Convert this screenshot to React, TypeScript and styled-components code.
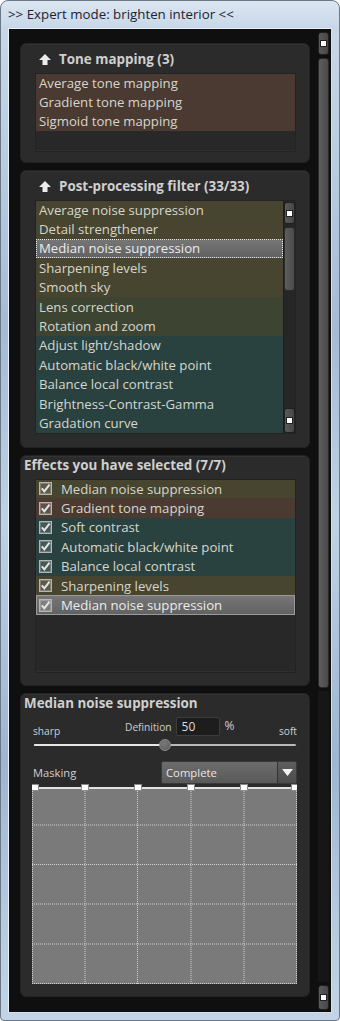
import React from 'react';
import styled, { createGlobalStyle } from 'styled-components';

const Global = createGlobalStyle`
  html, body { margin: 0; padding: 0; background: #ffffff; }
  body { font-family: "Open Sans", "Noto Sans", sans-serif; }
  * { box-sizing: border-box; }
`;

const UI_FONT = `"Open Sans", "Noto Sans", sans-serif`;

const Window = styled.div`
  width: 340px;
  height: 1021px;
  display: flex;
  flex-direction: column;
  border: 1px solid #6b7888;
  border-radius: 8px 8px 4px 4px;
  overflow: hidden;
  background: linear-gradient(
    180deg,
    #dbe6f1 0px,
    #c8d7e8 27px,
    #b9cce1 160px,
    #a4bbd5 330px,
    #bfd1e5 520px,
    #9cb5d1 760px,
    #b3c8de 900px,
    #c3d4e6 1021px
  );
`;

const TitleBar = styled.div`
  height: 27px;
  flex: none;
  display: flex;
  align-items: center;
  padding: 0 0 1px 7px;
  font-family: ${UI_FONT};
  font-size: 13.3px;
  color: #1b2230;
`;

const Frame = styled.div`
  flex: 1;
  display: flex;
  padding: 0 7px 7px 7px;
  min-height: 0;
`;

const Client = styled.div`
  flex: 1;
  display: flex;
  background: #0f0f0f;
  border: 1px solid #e9f0f7;
  border-right-color: #d3e0ed;
  border-bottom-color: #d3e0ed;
  min-height: 0;
`;

const Content = styled.div`
  flex: 1;
  display: flex;
  flex-direction: column;
  gap: 7px;
  padding: 14px 8px 0 11px;
`;

const OuterScroll = styled.div`
  width: 11px;
  margin-right: 2px;
  flex: none;
  display: flex;
  flex-direction: column;
  padding: 3px 0 2px;
  gap: 3px;
`;

const ScrollButton = styled.div<{ $h: number }>`
  height: ${(p) => p.$h}px;
  flex: none;
  border-radius: 3px;
  border: 1px solid #202020;
  background: linear-gradient(90deg, #5a5a5a, #474747);
  display: flex;
  align-items: center;
  justify-content: center;
  &::after {
    content: '';
    width: 5px;
    height: 5px;
    background: #ffffff;
    border: 1px solid #222;
  }
`;

const ScrollThumb = styled.div<{ $h: number }>`
  height: ${(p) => p.$h}px;
  flex: none;
  border-radius: 3px;
  background: linear-gradient(90deg, #5d5d5d, #4a4a4a);
  border: 1px solid #2a2a2a;
`;

const ScrollTrack = styled.div<{ $bg?: string }>`
  flex: 1;
  background: ${(p) => p.$bg ?? '#161616'};
`;

const Panel = styled.div<{ $pb: number }>`
  background: #2b2b2b;
  border-radius: 6px;
  border: 1px solid #232323;
  padding: 0 13px ${(p) => p.$pb}px 14px;
  display: flex;
  flex-direction: column;
  box-shadow: inset 0 1px 0 #333;
`;

const Header = styled.div<{ $icon?: boolean }>`
  display: flex;
  align-items: center;
  height: 20px;
  margin-top: ${(p) => (p.$icon ? 5 : -1)}px;
  margin-bottom: 4px;
  margin-left: ${(p) => (p.$icon ? 4 : -11)}px;
  gap: 8px;
  font-family: ${UI_FONT};
  font-weight: 700;
  font-size: 13.4px;
  color: #cfcfcf;
  white-space: nowrap;
`;

const ListBox = styled.div<{ $h: number }>`
  height: ${(p) => p.$h}px;
  display: flex;
  background: #282828;
  border: 1px solid #232323;
  box-shadow: inset 0 -1px 0 #2f2f2f;
  overflow: hidden;
`;

const Rows = styled.div`
  flex: 1;
  display: flex;
  flex-direction: column;
  margin-top: -1px;
`;

const tones: Record<string, string> = {
  brown: '#4a3a31',
  olive: '#47452f',
  moss: '#3d4532',
  teal: '#2a423f',
};

const Row = styled.div<{ $tone: string; $sel?: 'dotted' | 'solid' }>`
  height: 19.4px;
  flex: none;
  display: flex;
  align-items: center;
  gap: 9px;
  padding-left: 2px;
  font-family: ${UI_FONT};
  font-size: 13.2px;
  color: #d6d6ce;
  white-space: nowrap;
  background: ${(p) => (p.$sel ? 'linear-gradient(180deg, #767676, #626262)' : tones[p.$tone])};
  border: 1px ${(p) => (p.$sel === 'dotted' ? 'dotted #e6e6e6' : p.$sel === 'solid' ? 'solid #9a9a9a' : 'solid transparent')};
  ${(p) => (p.$sel ? 'color: #ececec;' : '')}
`;

const InnerScroll = styled.div`
  width: 12px;
  flex: none;
  display: flex;
  flex-direction: column;
  gap: 3px;
  padding: 1px 0 0;
  background: #262626;
  border-left: 1px solid #1e1e1e;
`;

const ArrowIcon = () => (
  <svg width="12" height="11" viewBox="0 0 12 11">
    <polygon points="6,0 12,6 8.5,6 8.5,11 3.5,11 3.5,6 0,6" fill="#ececec" />
  </svg>
);

const CheckIcon = () => (
  <svg width="13" height="13" viewBox="0 0 13 13">
    <rect x="0.5" y="0.5" width="12" height="12" fill="rgba(255,255,255,0.12)" stroke="#b5b5b5" />
    <rect x="1.5" y="1.5" width="10" height="10" fill="none" stroke="rgba(255,255,255,0.22)" />
    <path d="M2.8 6.4 L5.3 9.3 L10.5 2.6" fill="none" stroke="#e4e4e4" strokeWidth="2" />
  </svg>
);

/* Detail panel */
const Detail = styled.div`
  display: flex;
  flex-direction: column;
  margin-left: -3px;
  margin-right: -1px;
`;

const LabelRow = styled.div`
  display: grid;
  grid-template-columns: 92px auto 1fr auto;
  align-items: end;
  height: 19px;
  font-family: ${UI_FONT};
  font-size: 10.2px;
  color: #cfcfcf;
  padding-left: 1px;
`;

const SmallLabel = styled.span`
  line-height: 14px;
  margin-bottom: -2px;
`;

const DefGroup = styled.div`
  display: flex;
  align-items: center;
  gap: 4px;
  align-self: start;
  height: 19px;
`;

const ValueBox = styled.div`
  width: 44px;
  height: 19px;
  background: #1d1d1d;
  border: 1px solid #3c3c3c;
  border-radius: 2px;
  display: flex;
  align-items: center;
  padding-left: 5px;
  font-size: 12px;
  color: #dedede;
`;

const Percent = styled.span`
  margin-left: 1px;
  font-size: 12px;
  margin-top: -3px;
`;

const SliderTrack = styled.div`
  position: relative;
  height: 14px;
  margin: 2px 0 0 1px;
  display: flex;
  align-items: center;
`;

const TrackLine = styled.div`
  flex: 1;
  height: 4px;
  border-radius: 2px;
  background: #b9b9b9;
  border: 1px solid #2a2a2a;
  overflow: hidden;
`;

const TrackFill = styled.div`
  height: 100%;
  background: #e6e6e6;
`;

const Thumb = styled.div`
  position: absolute;
  top: 1px;
  width: 12px;
  height: 12px;
  border-radius: 50%;
  background: radial-gradient(circle at 40% 35%, #7a7a7a, #5a5a5a);
  border: 1px solid #8a8a8a;
  transform: translateX(-6px);
`;

const MaskRow = styled.div`
  display: flex;
  align-items: center;
  height: 23px;
  margin-top: 9px;
`;

const MaskLabel = styled.span`
  flex: 1;
  font-family: ${UI_FONT};
  font-size: 11.2px;
  color: #cfcfcf;
  padding-left: 1px;
`;

const Dropdown = styled.div`
  width: 136px;
  height: 23px;
  display: flex;
  border: 1px solid #3a3a3a;
  border-radius: 2px;
  overflow: hidden;
`;

const DropText = styled.div`
  flex: 1;
  display: flex;
  align-items: center;
  padding-left: 4px;
  font-family: ${UI_FONT};
  font-size: 11.3px;
  color: #e6e6e6;
  background: linear-gradient(180deg, #6c6c6c, #5a5a5a);
`;

const DropButton = styled.div`
  width: 19px;
  display: flex;
  align-items: center;
  justify-content: center;
  background: linear-gradient(180deg, #5e5e5e, #4c4c4c);
  border-left: 1px solid #333;
`;

const GridWrap = styled.div`
  height: 200px;
`;

const CurveGrid = () => {
  const W = 265;
  const H = 197;
  const top = 3;
  const xs = [53, 105.5, 159, 212];
  const ys = [38, 77.5, 117, 157];
  const handles = [3, 53, 106, 159, 212, 263];
  return (
    <svg width={W} height={H + top} viewBox={`0 0 ${W} ${H + top}`} style={{ display: 'block' }}>
      <rect x="0" y={top} width={W} height={H} fill="#7a7a7a" />
      {xs.map((x) => (
        <line key={'v' + x} x1={x} y1={top} x2={x} y2={top + H} stroke="#d2d2d2" strokeDasharray="1 1" />
      ))}
      {ys.map((y) => (
        <line key={'h' + y} x1={0} y1={top + y} x2={W} y2={top + y} stroke="#d2d2d2" strokeDasharray="1 1" />
      ))}
      <line x1={0.5} y1={top} x2={0.5} y2={top + H} stroke="#d2d2d2" strokeDasharray="1 1" />
      <line x1={W - 0.5} y1={top} x2={W - 0.5} y2={top + H} stroke="#d2d2d2" strokeDasharray="1 1" />
      <line x1={0} y1={top + H - 0.5} x2={W} y2={top + H - 0.5} stroke="#d2d2d2" strokeDasharray="1 1" />
      <line x1={0} y1={top + 1} x2={W} y2={top + 1} stroke="#e2e2e2" strokeWidth="2" />
      {handles.map((x) => (
        <rect key={'k' + x} x={x - 3.5} y={0.5} width="7" height="6" fill="#ffffff" stroke="#8a8a8a" />
      ))}
    </svg>
  );
};

type Item = [string, string];

const toneItems: Item[] = [
  ['Average tone mapping', 'brown'],
  ['Gradient tone mapping', 'brown'],
  ['Sigmoid tone mapping', 'brown'],
];

const postItems: Item[] = [
  ['Average noise suppression', 'olive'],
  ['Detail strengthener', 'olive'],
  ['Median noise suppression', 'sel'],
  ['Sharpening levels', 'olive'],
  ['Smooth sky', 'olive'],
  ['Lens correction', 'moss'],
  ['Rotation and zoom', 'moss'],
  ['Adjust light/shadow', 'teal'],
  ['Automatic black/white point', 'teal'],
  ['Balance local contrast', 'teal'],
  ['Brightness-Contrast-Gamma', 'teal'],
  ['Gradation curve', 'teal'],
];

const selectedItems: Item[] = [
  ['Median noise suppression', 'olive'],
  ['Gradient tone mapping', 'brown'],
  ['Soft contrast', 'teal'],
  ['Automatic black/white point', 'teal'],
  ['Balance local contrast', 'teal'],
  ['Sharpening levels', 'olive'],
  ['Median noise suppression', 'sel'],
];

export default function App() {
  return (
    <>
      <Global />
      <Window>
        <TitleBar>&gt;&gt; Expert mode: brighten interior &lt;&lt;</TitleBar>
        <Frame>
          <Client>
            <Content>
              <Panel $pb={10}>
                <Header $icon>
                  <ArrowIcon />
                  <span>Tone mapping (3)</span>
                </Header>
                <ListBox $h={79}>
                  <Rows>
                    {toneItems.map(([t, c]) => (
                      <Row key={t} $tone={c}>{t}</Row>
                    ))}
                  </Rows>
                </ListBox>
              </Panel>

              <Panel $pb={13}>
                <Header $icon>
                  <ArrowIcon />
                  <span>Post-processing filter (33/33)</span>
                </Header>
                <ListBox $h={234}>
                  <Rows>
                    {postItems.map(([t, c]) => (
                      <Row key={t} $tone={c} $sel={c === 'sel' ? 'dotted' : undefined}>{t}</Row>
                    ))}
                  </Rows>
                  <InnerScroll>
                    <ScrollButton $h={22} />
                    <ScrollThumb $h={64} />
                    <ScrollTrack $bg="#262626" />
                    <ScrollButton $h={25} />
                  </InnerScroll>
                </ListBox>
              </Panel>

              <Panel $pb={12}>
                <Header>Effects you have selected (7/7)</Header>
                <ListBox $h={194}>
                  <Rows>
                    {selectedItems.map(([t, c], i) => (
                      <Row key={t + i} $tone={c} $sel={c === 'sel' ? 'solid' : undefined}>
                        <CheckIcon />
                        {t}
                      </Row>
                    ))}
                  </Rows>
                </ListBox>
              </Panel>

              <Panel $pb={12}>
                <Header>Median noise suppression</Header>
                <Detail>
                  <LabelRow>
                    <SmallLabel>sharp</SmallLabel>
                    <DefGroup>
                      <span>Definition</span>
                      <ValueBox>50</ValueBox>
                      <Percent>%</Percent>
                    </DefGroup>
                    <span />
                    <SmallLabel>soft</SmallLabel>
                  </LabelRow>
                  <SliderTrack>
                    <TrackLine>
                      <TrackFill style={{ width: '50%' }} />
                    </TrackLine>
                    <Thumb style={{ left: '50%' }} />
                  </SliderTrack>
                  <MaskRow>
                    <MaskLabel>Masking</MaskLabel>
                    <Dropdown>
                      <DropText>Complete</DropText>
                      <DropButton>
                        <svg width="11" height="7" viewBox="0 0 11 7">
                          <polygon points="0,0 11,0 5.5,7" fill="#f2f2f2" />
                        </svg>
                      </DropButton>
                    </Dropdown>
                  </MaskRow>
                  <GridWrap>
                    <CurveGrid />
                  </GridWrap>
                </Detail>
              </Panel>
            </Content>
            <OuterScroll>
              <ScrollButton $h={23} />
              <ScrollThumb $h={630} />
              <ScrollTrack />
              <ScrollButton $h={25} />
            </OuterScroll>
          </Client>
        </Frame>
      </Window>
    </>
  );
}
